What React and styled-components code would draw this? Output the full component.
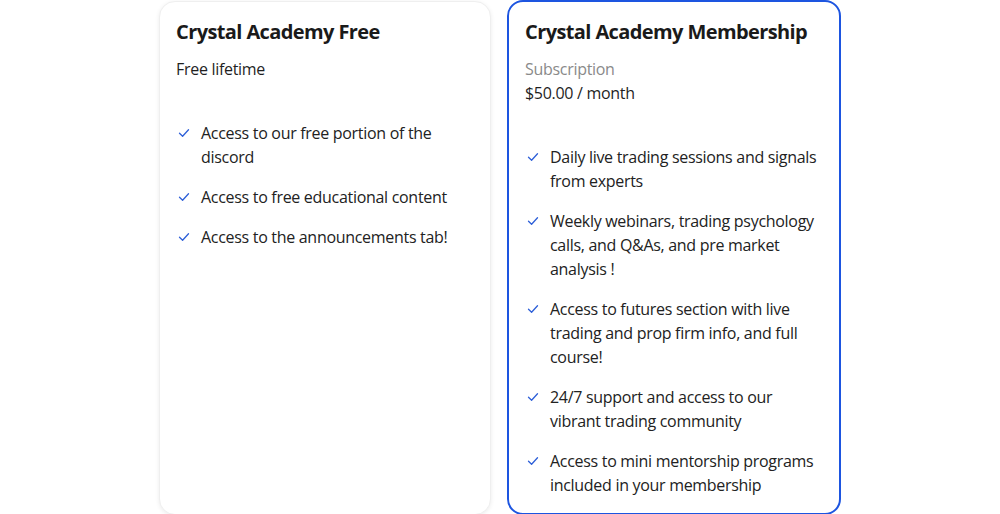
import React from 'react'
import styled, { createGlobalStyle } from 'styled-components'

const GlobalStyle = createGlobalStyle`
  body {
    margin: 0;
    background: #ffffff;
    font-family: "Open Sans", "Noto Sans", sans-serif;
    color: #1c1c1c;
  }
`

const plans = [
  {
    name: 'Crystal Academy Free',
    price: 'Free lifetime',
    features: [
      'Access to our free portion of the discord',
      'Access to free educational content',
      'Access to the announcements tab!',
    ],
  },
  {
    name: 'Crystal Academy Membership',
    label: 'Subscription',
    price: '$50.00 / month',
    highlighted: true,
    features: [
      'Daily live trading sessions and signals from experts',
      'Weekly webinars, trading psychology calls, and Q&As, and pre market analysis !',
      'Access to futures section with live trading and prop firm info, and full course!',
      '24/7 support and access to our vibrant trading community',
      'Access to mini mentorship programs included in your membership',
    ],
  },
]

const Check = () => (
  <svg width="12" height="12" viewBox="0 0 12 12" fill="none">
    <path d="M1.5 6.2 L4.6 9.2 L10.5 2.8" stroke="#2d5fd8" strokeWidth="1.3" strokeLinecap="round" strokeLinejoin="round" />
  </svg>
)

const App = () => (
  <>
    <GlobalStyle />
    <Grid>
      {plans.map((plan) => (
        <Card key={plan.name} $highlighted={plan.highlighted}>
          <Title>{plan.name}</Title>
          <PriceBlock>
            {plan.label && <Label>{plan.label}</Label>}
            <Price>{plan.price}</Price>
          </PriceBlock>
          <Features>
            {plan.features.map((f) => (
              <Feature key={f}>
                <IconWrap><Check /></IconWrap>
                <span>{f}</span>
              </Feature>
            ))}
          </Features>
        </Card>
      ))}
    </Grid>
  </>
)

const Grid = styled.div`
  display: grid;
  grid-template-columns: 332px 334px;
  gap: 16px;
  justify-content: center;
  align-items: stretch;
`

const Card = styled.div`
  background: #fff;
  border-radius: 16px;
  padding: 16px;
  border: ${({ $highlighted }) => ($highlighted ? '2px solid #1d55e0' : '1px solid #efefef')};
  box-shadow: ${({ $highlighted }) => ($highlighted ? 'none' : '0 1px 4px rgba(0, 0, 0, 0.08)')};
  margin-top: ${({ $highlighted }) => ($highlighted ? '0' : '1px')};
`

const Title = styled.h2`
  margin: 0 0 11px;
  font-size: 20px;
  line-height: 28px;
  font-weight: 700;
  letter-spacing: -0.6px;
  color: #1a1a1a;
`

const PriceBlock = styled.div`
  display: flex;
  flex-direction: column;
  margin-bottom: 40px;
  letter-spacing: -0.3px;
`

const Label = styled.div`
  font-size: 16px;
  line-height: 24px;
  color: #8a8a8a;
`

const Price = styled.div`
  font-size: 16px;
  line-height: 24px;
  color: #1f1f1f;
`

const Features = styled.ul`
  list-style: none;
  margin: 0;
  padding: 0;
  display: flex;
  flex-direction: column;
  gap: 16px;
`

const Feature = styled.li`
  display: flex;
  gap: 11px;
  font-size: 16px;
  line-height: 24px;
  letter-spacing: -0.3px;
  color: #222;
  padding-left: 2px;
`

const IconWrap = styled.span`
  flex: none;
  height: 24px;
  display: flex;
  align-items: center;
`

export default App
